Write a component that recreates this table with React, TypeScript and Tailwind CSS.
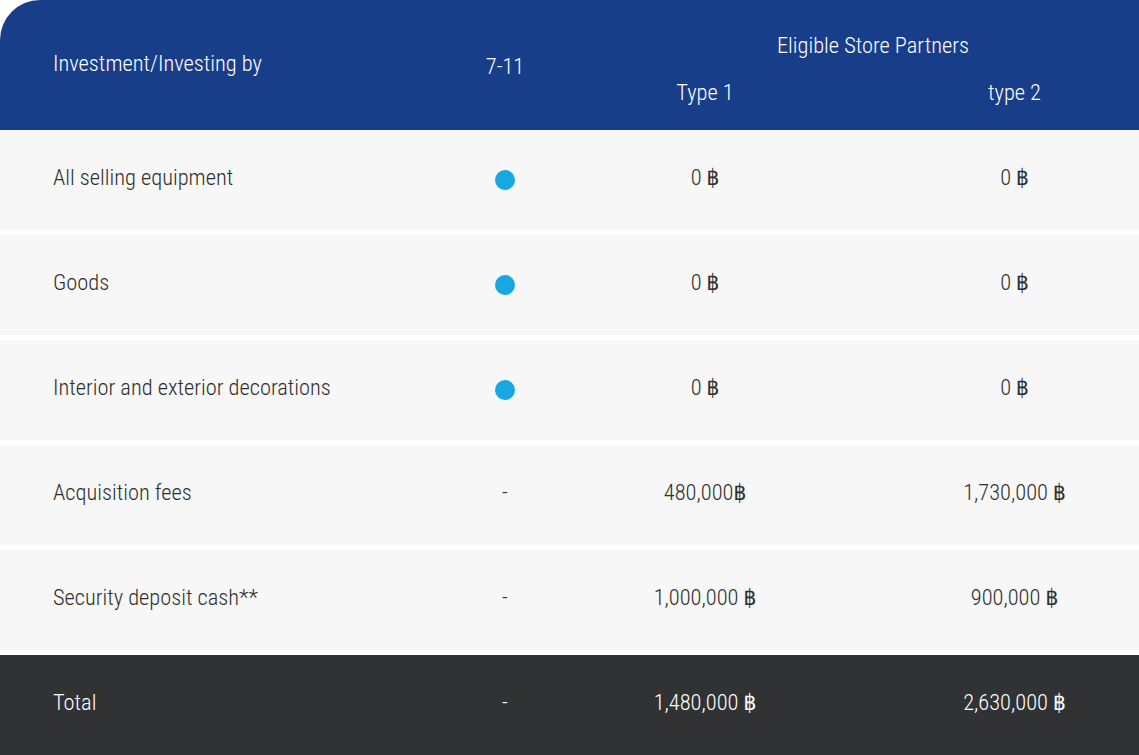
const rows = [
  { label: 'All selling equipment', dot: true, t1: '0 ฿', t2: '0 ฿' },
  { label: 'Goods', dot: true, t1: '0 ฿', t2: '0 ฿' },
  { label: 'Interior and exterior decorations', dot: true, t1: '0 ฿', t2: '0 ฿' },
  { label: 'Acquisition fees', dot: false, t1: '480,000฿', t2: '1,730,000 ฿' },
  { label: 'Security deposit cash**', dot: false, t1: '1,000,000 ฿', t2: '900,000 ฿' },
];

const grid = 'grid grid-cols-[405px_200px_200px_1fr] items-center';

export default function App() {
  return (
    <div
      className="w-[1139px] h-[755px] bg-white flex flex-col text-[22.4px] leading-[30px] font-light [font-stretch:condensed]"
      style={{ fontFamily: '"Roboto Condensed", "DejaVu Sans Condensed", Roboto, sans-serif' }}
    >
      <div className={`${grid} h-[130px] shrink-0 bg-[#183e8a] text-white rounded-tl-[40px] grid-rows-[1fr_1fr]`}>
        <div className="row-span-2 pl-[53px] pb-[4px]">Investment/Investing by</div>
        <div className="row-span-2 text-center pt-[2px]">7-11</div>
        <div className="col-span-2 text-center self-end pb-[5px] pl-[2px]">Eligible Store Partners</div>
        <div className="text-center self-start pt-[12px]">Type 1</div>
        <div className="text-center self-start pt-[12px] pl-[85px]">type 2</div>
      </div>
      <div className="flex flex-col gap-[5px]">
        {rows.map((r) => (
          <div key={r.label} className={`${grid} h-[100px] shrink-0 bg-[#f7f7f7] text-[#2e2e2e]`}>
            <div className="pl-[53px] pb-[6px]">{r.label}</div>
            <div className="flex justify-center">
              {r.dot ? <span className="block w-5 h-5 rounded-full bg-[#17a8e1]" /> : <span className="pb-[6px]">-</span>}
            </div>
            <div className="text-center pb-[6px]">{r.t1}</div>
            <div className="text-center pl-[85px] pb-[6px]">{r.t2}</div>
          </div>
        ))}
        <div className={`${grid} h-[100px] shrink-0 bg-[#313234] text-white`}>
          <div className="pl-[53px] pb-[6px]">Total</div>
          <div className="text-center pb-[6px]">-</div>
          <div className="text-center pb-[6px]">1,480,000 ฿</div>
          <div className="text-center pl-[85px] pb-[6px]">2,630,000 ฿</div>
        </div>
      </div>
    </div>
  );
}
